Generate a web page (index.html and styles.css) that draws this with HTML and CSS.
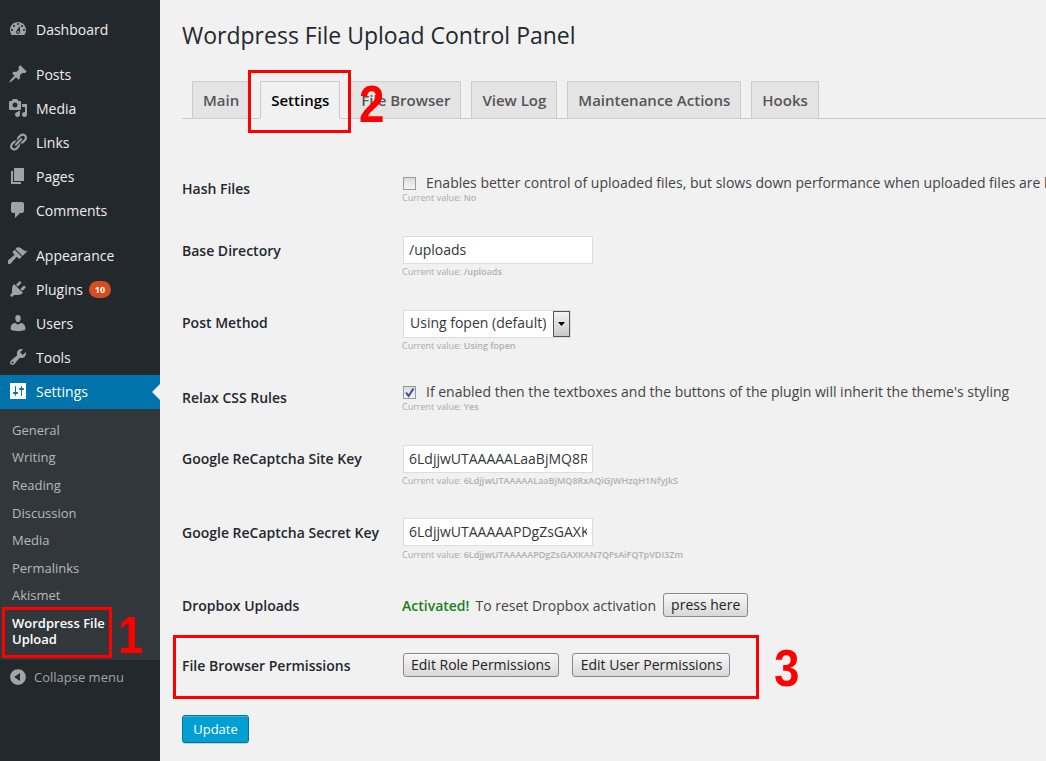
FILE: index.html
```html
<!DOCTYPE html>
<html lang="en">
<head>
<meta charset="utf-8">
<title>Wordpress File Upload Control Panel</title>
<link rel="stylesheet" href="styles.css">
</head>
<body>
<div class="page">
  <nav class="sidebar">
    <ul class="menu">
      <li class="item"><svg class="icon" viewBox="0 0 20 20"><path d="M3.76 16h12.48c1.1-1.37 1.76-3.11 1.76-5 0-4.42-3.58-8-8-8s-8 3.58-8 8c0 1.89.66 3.63 1.76 5zM10 4c.55 0 1 .45 1 1s-.45 1-1 1-1-.45-1-1 .45-1 1-1zM6 6c.55 0 1 .45 1 1s-.45 1-1 1-1-.45-1-1 .45-1 1-1zm8 0c.55 0 1 .45 1 1s-.45 1-1 1-1-.45-1-1 .45-1 1-1zm-5.37 5.55L12 7v6c0 1.1-.9 2-2 2s-2-.9-2-2c0-.57.24-1.08.63-1.45zM4 10c.55 0 1 .45 1 1s-.45 1-1 1-1-.45-1-1 .45-1 1-1zm12 0c.55 0 1 .45 1 1s-.45 1-1 1-1-.45-1-1 .45-1 1-1zm-5 3c0-.55-.45-1-1-1s-1 .45-1 1 .45 1 1 1 1-.45 1-1z" fill-rule="evenodd"/></svg>Dashboard</li>
    </ul>
    <ul class="menu">
      <li class="item"><svg class="icon" viewBox="0 0 20 20"><path d="M10.44 3.02l1.82-1.82 6.36 6.35-1.83 1.82c-1.05-.68-2.48-.57-3.41.36l-.75.75c-.92.93-1.04 2.35-.35 3.41l-1.83 1.82-2.41-2.41-2.8 2.79c-.42.42-3.38 2.71-3.8 2.29s1.86-3.39 2.28-3.81l2.79-2.79L4.1 9.36l1.83-1.82c1.05.69 2.48.57 3.4-.36l.75-.75c.93-.92 1.05-2.35.36-3.41z"/></svg>Posts</li>
      <li class="item"><svg class="icon" viewBox="0 0 20 20"><path d="M13 11V4c0-.55-.45-1-1-1h-1.67L9 1H5L3.67 3H2c-.55 0-1 .45-1 1v7c0 .55.45 1 1 1h10c.55 0 1-.45 1-1zM7 4.5c1.38 0 2.5 1.12 2.5 2.5S8.38 9.5 7 9.5 4.5 8.38 4.5 7 5.62 4.5 7 4.5zM14 6h5v10.5c0 1.38-1.12 2.5-2.5 2.5S14 17.88 14 16.5s1.12-2.5 2.5-2.5c.17 0 .34.02.5.05V9h-3V6zm-4 8.05V13h2v3.5c0 1.38-1.12 2.5-2.5 2.5S7 17.88 7 16.5 8.12 14 9.5 14c.17 0 .34.02.5.05z" fill-rule="evenodd"/></svg>Media</li>
      <li class="item"><svg class="icon" viewBox="0 0 20 20"><path d="M17.74 2.76c1.68 1.69 1.68 4.41 0 6.1l-1.53 1.52c-1.12 1.12-2.7 1.47-4.14 1.09l2.62-2.61.76-.77.76-.76c.84-.84.84-2.2 0-3.04-.84-.85-2.2-.85-3.04 0l-.77.76-3.38 3.38c-.37-1.44-.02-3.02 1.1-4.14l1.52-1.53c1.69-1.68 4.42-1.68 6.1 0zM8.59 13.43l5.34-5.34c.42-.42.42-1.1 0-1.52-.44-.43-1.13-.39-1.53 0l-5.33 5.34c-.42.42-.42 1.1 0 1.52.44.43 1.13.39 1.52 0zm-.76 2.29l4.14-4.15c.38 1.44.03 3.02-1.09 4.14l-1.52 1.53c-1.69 1.68-4.41 1.68-6.1 0-1.68-1.68-1.68-4.42 0-6.1l1.53-1.52c1.12-1.12 2.7-1.47 4.14-1.1l-4.14 4.15c-.85.84-.85 2.2 0 3.05.84.84 2.2.84 3.04 0z"/></svg>Links</li>
      <li class="item"><svg class="icon" viewBox="0 0 20 20"><path d="M6 15V2h10v13H6zm-1 1h8v2H3V5h2v11z"/></svg>Pages</li>
      <li class="item"><svg class="icon" viewBox="0 0 20 20"><path d="M5 2h9c1.1 0 2 .9 2 2v7c0 1.1-.9 2-2 2h-2l-5 5v-5H5c-1.1 0-2-.9-2-2V4c0-1.1.9-2 2-2z"/></svg>Comments</li>
    </ul>
    <ul class="menu">
      <li class="item"><svg class="icon" viewBox="0 0 20 20"><path d="M14.48 11.06L7.41 3.99l1.5-1.5c.5-.56 2.3-.47 3.51.32 1.21.8 1.43 1.28 2.91 2.1 1.18.64 2.45 1.26 4.45.85zm-.71.71L6.7 4.7 4.93 6.47c-.39.39-.39 1.02 0 1.41l1.06 1.06c.39.39.39 1.03 0 1.42-.6.6-6.06 5.26-6.06 5.26-.78.78-.78 2.04 0 2.82.78.78 2.04.78 2.82 0 0 0 4.66-5.46 5.26-6.06.39-.39 1.03-.39 1.42 0l1.06 1.06c.39.39 1.02.39 1.41 0z"/></svg>Appearance</li>
      <li class="item"><svg class="icon" viewBox="0 0 20 20"><path d="M13.11 4.36L9.87 7.6 8 5.73l3.24-3.24c.35-.34 1.05-.2 1.56.32.52.51.66 1.21.31 1.55zm-8 1.77l.91-1.12 9.01 9.01-1.19.84c-.71.71-2.63 1.16-3.82 1.16H6.14L4.9 17.26c-.59.59-1.54.59-2.12 0-.59-.58-.59-1.53 0-2.12l1.24-1.24v-3.88c0-1.13.4-3.19 1.09-3.89zm7.26 3.97l3.24-3.24c.34-.35 1.04-.21 1.55.31.52.51.66 1.21.31 1.55l-3.24 3.25z"/></svg>Plugins<span class="badge">10</span></li>
      <li class="item"><svg class="icon" viewBox="0 0 20 20"><path d="M10 9.25c-2.27 0-2.73-3.44-2.73-3.44C7 4.02 7.82 2 9.97 2c2.16 0 2.98 2.02 2.71 3.81 0 0-.41 3.44-2.68 3.44zm0 2.57L12.72 10c2.39 0 4.52 2.33 4.52 4.53v2.49s-3.65 1.13-7.24 1.13c-3.65 0-7.24-1.13-7.24-1.13v-2.49c0-2.25 1.94-4.48 4.47-4.48z"/></svg>Users</li>
      <li class="item"><svg class="icon" viewBox="0 0 20 20"><path d="M16.68 9.77c-1.34 1.34-3.3 1.67-4.95.99l-5.41 6.52c-.99.99-2.59.99-3.58 0s-.99-2.59 0-3.57l6.52-5.42c-.68-1.65-.35-3.61.99-4.95 1.28-1.28 3.12-1.62 4.72-1.06l-2.89 2.89 2.82 2.82 2.86-2.87c.53 1.58.18 3.39-1.08 4.65zM3.81 16.21c.4.39 1.04.39 1.43 0 .4-.4.4-1.04 0-1.43-.39-.4-1.03-.4-1.43 0-.39.39-.39 1.03 0 1.43z" fill-rule="evenodd"/></svg>Tools</li>
      <li class="item active"><svg class="icon" viewBox="0 0 20 20"><path d="M18 18V2H2v16h16zM8 11h1c.55 0 1 .45 1 1s-.45 1-1 1H8v1.5c0 .28-.22.5-.5.5s-.5-.22-.5-.5V13H6c-.55 0-1-.45-1-1s.45-1 1-1h1V5.5c0-.28.22-.5.5-.5s.5.22.5.5V11zm5-2h-1c-.55 0-1-.45-1-1s.45-1 1-1h1V5.5c0-.28.22-.5.5-.5s.5.22.5.5V7h1c.55 0 1 .45 1 1s-.45 1-1 1h-1v5.5c0 .28-.22.5-.5.5s-.5-.22-.5-.5V9z" fill-rule="evenodd"/></svg>Settings</li>
    </ul>
    <ul class="submenu">
      <li>General</li>
      <li>Writing</li>
      <li>Reading</li>
      <li>Discussion</li>
      <li>Media</li>
      <li>Permalinks</li>
      <li>Akismet</li>
      <li class="current">Wordpress File Upload</li>
    </ul>
    <div class="collapse"><svg class="icon-small" viewBox="0 0 20 20"><path d="M10 2.16c4.33 0 7.84 3.51 7.84 7.84s-3.51 7.84-7.84 7.84S2.16 14.33 2.16 10 5.71 2.16 10 2.16zm2 11.72V6.12L6.18 9.97z"/></svg>Collapse menu</div>
  </nav>

  <main class="content">
    <h1 class="title">Wordpress File Upload Control Panel</h1>
    <div class="tabs">
      <span class="tab">Main</span>
      <span class="tab tab-active">Settings</span>
      <span class="tab">File Browser</span>
      <span class="tab">View Log</span>
      <span class="tab">Maintenance Actions</span>
      <span class="tab">Hooks</span>
    </div>

    <div class="rows">
      <div class="row">
        <div class="label label-low">Hash Files</div>
        <div class="field">
          <div class="check-line"><span class="checkbox"></span><span class="check-text">Enables better control of uploaded files, but slows down performance when uploaded files are large</span></div>
          <div class="current-value check-value">Current value: <b>No</b></div>
        </div>
      </div>
      <div class="row">
        <div class="label">Base Directory</div>
        <div class="field">
          <input class="text-input" type="text" value="/uploads">
          <div class="current-value value-near">Current value: <b>/uploads</b></div>
        </div>
      </div>
      <div class="row">
        <div class="label label-mid">Post Method</div>
        <div class="field">
          <div class="select"><span class="select-text">Using fopen (default)</span><span class="select-arrow"><svg width="7" height="4" viewBox="0 0 7 4"><path d="M0 0h7L3.5 4z"/></svg></span></div>
          <div class="current-value value-far">Current value: <b>Using fopen</b></div>
        </div>
      </div>
      <div class="row">
        <div class="label label-low">Relax CSS Rules</div>
        <div class="field">
          <div class="check-line"><span class="checkbox"><svg width="11" height="11" viewBox="0 0 11 11"><path d="M2 5.5l2.6 3.6L9.5 1.5" fill="none" stroke="#3b4fa8" stroke-width="2"/></svg></span><span class="check-text">If enabled then the textboxes and the buttons of the plugin will inherit the theme's styling</span></div>
          <div class="current-value check-value">Current value: <b>Yes</b></div>
        </div>
      </div>
      <div class="row">
        <div class="label label-mid">Google ReCaptcha Site Key</div>
        <div class="field">
          <input class="text-input" type="text" value="6LdjjwUTAAAAALaaBjMQ8RxAQiGJWHzqH1NfyJkS">
          <div class="current-value value-near">Current value: <b>6LdjjwUTAAAAALaaBjMQ8RxAQiGJWHzqH1NfyJkS</b></div>
        </div>
      </div>
      <div class="row row-secret">
        <div class="label">Google ReCaptcha Secret Key</div>
        <div class="field">
          <input class="text-input" type="text" value="6LdjjwUTAAAAAPDgZsGAXKAN7QFsAiFQTpVDI3Zm">
          <div class="current-value value-far">Current value: <b>6LdjjwUTAAAAAPDgZsGAXKAN7QFsAiFQTpVDI3Zm</b></div>
        </div>
      </div>
      <div class="row row-dropbox">
        <div class="label label-tight">Dropbox Uploads</div>
        <div class="field field-inline"><span class="activated">Activated!</span><span>To reset Dropbox activation</span><button class="btn" type="button">press here</button></div>
      </div>
      <div class="row row-perms">
        <div class="label label-tight">File Browser Permissions</div>
        <div class="field field-buttons"><button class="btn" type="button">Edit Role Permissions</button><button class="btn btn-user" type="button">Edit User Permissions</button></div>
      </div>
    </div>
    <button class="update" type="button">Update</button>
  </main>
</div>

<div class="mark mark-1"></div>
<div class="mark mark-2"></div>
<div class="mark mark-3"></div>
<span class="digit digit-1">1</span>
<span class="digit digit-2">2</span>
<span class="digit digit-3">3</span>
</body>
</html>
```
FILE: styles.css
```css
* { box-sizing: border-box; }
html, body { margin: 0; height: 100%; overflow: hidden; }
body { font-family: "Open Sans", sans-serif; background: #f1f1f1; color: #444; position: relative; }
ul { list-style: none; margin: 0; padding: 0; }

.page { display: flex; min-height: 761px; }

/* Sidebar */
.sidebar { width: 160px; flex: none; background: #23282d; padding-top: 13px; }
.menu { margin-bottom: 11px; }
.menu:nth-of-type(3) { margin-bottom: 0; }
.item { display: flex; align-items: center; height: 34px; padding: 0 0 2px 8px; font-size: 14px; color: #eee; position: relative; }
.icon { width: 20px; height: 20px; margin-right: 8px; fill: #9ea3a8; flex: none; }
.badge { margin-left: 6px; width: 22px; height: 17px; border-radius: 9px; background: #d54e21; color: #fff; font-size: 9px; font-weight: 700; display: flex; align-items: center; justify-content: center; }
.active { background: #0073aa; color: #fff; }
.active .icon { fill: #fff; }
.active::after { content: ""; position: absolute; right: 0; top: 9px; border: 8px solid transparent; border-right-color: #f1f1f1; border-left-width: 0; }
.submenu { background: #32373c; padding: 7.9px 0 6.1px; font-size: 13px; color: #b4b9be; }
.submenu li { padding: 0 12px; height: 27.6px; line-height: 27.6px; }
.submenu .current { height: auto; line-height: 16px; padding: 5.1px 12px 6.9px; color: #fff; font-weight: 600; }
.collapse { display: flex; align-items: center; height: 34px; padding-left: 8px; font-size: 13px; color: #a0a5aa; }
.icon-small { width: 20px; height: 20px; fill: #a0a5aa; margin-right: 6px; flex: none; }

/* Main */
.content { flex: 1; min-width: 0; padding: 0 0 0 22px; }
.title { margin: 0; padding-top: 20px; height: 81px; font-size: 23px; line-height: 30px; font-weight: 400; color: #23282d; }
.tabs { display: flex; gap: 10px; padding-left: 10px; height: 38px; border-bottom: 1px solid #ccc; }
.tab { height: 38px; padding: 0 10px; line-height: 36px; font-size: 15px; font-weight: 600; color: #555; background: #e4e4e4; border: 1px solid #ccc; white-space: nowrap; }
.tab-active { background: #f1f1f1; color: #000; border-bottom-color: #f1f1f1; }

.rows { display: flex; flex-direction: column; gap: 32px; padding-top: 54px; }
.row { display: flex; }
.row-secret { margin-bottom: 2px; }
.row-dropbox { margin-bottom: 4px; }
.row-perms { margin-bottom: 38px; }
.label { width: 221px; flex: none; padding-top: 5px; font-size: 14px; line-height: 20px; font-weight: 600; color: #23282d; }
.label-mid { padding-top: 4px; }
.label-low { padding-top: 6px; }
.label-tight { padding-top: 3px; }
.field { min-width: 0; white-space: nowrap; font-size: 14px; color: #444; }
.check-line { display: flex; align-items: center; height: 20px; }
.check-text { padding-bottom: 2px; }
.checkbox { width: 13px; height: 13px; margin-right: 10px; border: 1px solid #999; background: linear-gradient(#dcdcdc, #f6f6f6); display: flex; align-items: center; justify-content: center; flex: none; }
.current-value { font-size: 9px; line-height: 12px; margin: 1px 0 0 -1px; color: #aaa; }
.current-value b { font-weight: 600; color: #b0b0b0; }
.check-value { margin-top: -1px; }
.value-near { margin-top: 2px; margin-bottom: -1px; }
.value-far { margin-top: 3px; margin-bottom: -2px; }
.text-input { display: block; width: 190px; height: 28px; padding: 0 5px 2px; border: 1px solid #ddd; background: #fff; font-family: "Open Sans", sans-serif; font-size: 14px; color: #32373c; outline: 0; }
.select { display: flex; width: 168px; height: 28px; margin: 1px 0 -1px; border: 1px solid #ddd; background: #fff; align-items: stretch; }
.select-text { padding-left: 6px; line-height: 23px; font-size: 14px; color: #32373c; width: 150px; }
.select-arrow { width: 17px; background: linear-gradient(#f4f4f4, #c8c8c8); border: 1px solid #555; display: flex; align-items: center; justify-content: center; }
.field-inline { display: flex; align-items: center; height: 24px; gap: 7px; margin-left: -1px; }
.activated { color: #1a7f1a; font-weight: 600; margin-right: -1px; }
.field-buttons { display: flex; gap: 13px; }
.btn { height: 24px; padding: 0 7px; font-family: "Open Sans", sans-serif; font-size: 14px; line-height: 20px; color: #222; border: 1px solid #888; border-radius: 3px; background: linear-gradient(#f7f7f7, #d8d8d8); }
.btn-user { padding-left: 8px; }
.update { display: block; height: 28px; width: 67px; padding: 0; font-family: "Open Sans", sans-serif; font-size: 13px; color: #fff; background: #00a0d2; border: 1px solid #0073aa; border-radius: 3px; box-shadow: inset 0 1px 0 rgba(120,200,230,.5), 0 1px 0 rgba(0,0,0,.15); }

/* Red callouts drawn over the screenshot */
.mark { position: absolute; border: 3px solid #f00; }
.mark-1 { left: 2px; top: 607px; width: 110px; height: 51px; }
.mark-2 { left: 248px; top: 70px; width: 103px; height: 63px; }
.mark-3 { left: 173px; top: 635px; width: 586px; height: 64px; }
.digit { position: absolute; font-family: "Liberation Sans", sans-serif; font-weight: 700; font-size: 52px; line-height: 52px; color: #f00; transform: scaleX(.88); transform-origin: 0 0; }
.digit-1 { left: 118px; top: 609px; }
.digit-2 { left: 359px; top: 78px; }
.digit-3 { left: 774px; top: 642px; }
```
